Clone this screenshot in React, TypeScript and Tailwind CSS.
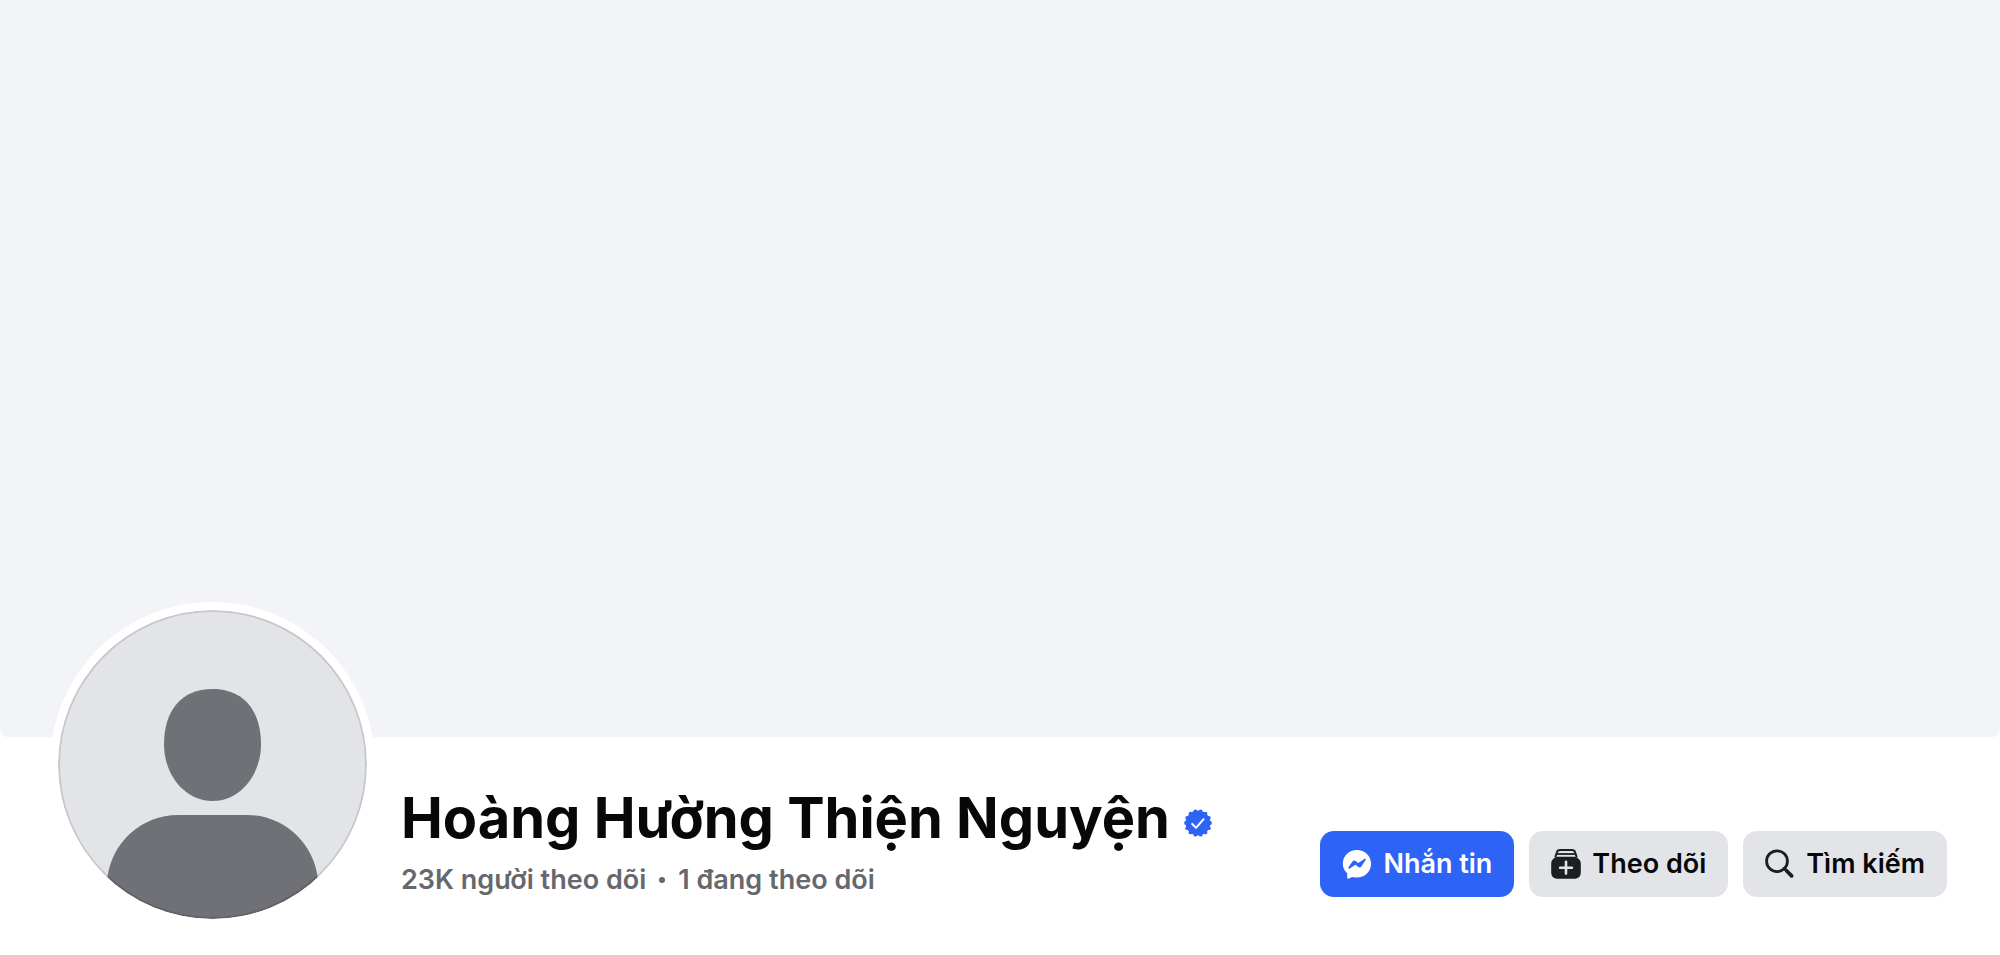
import type { ReactNode } from "react";

const PROFILE = {
  name: "Hoàng Hường Thiện Nguyện",
  followers: "23K người theo dõi",
  following: "1 đang theo dõi",
};

function AvatarPlaceholder() {
  return (
    <div className="shrink-0 size-[325px] -mt-[135px] rounded-full bg-white p-2">
      <svg viewBox="0 0 309 309" className="block size-full rounded-full" role="img" aria-label={PROFILE.name}>
        <defs>
          <clipPath id="avatar-clip">
            <circle cx="154.5" cy="154.5" r="154.5" />
          </clipPath>
        </defs>
        <g clipPath="url(#avatar-clip)">
          <rect width="309" height="309" fill="#e2e4e8" />
          <g fill="#707176">
            <path d="M154.500 79C186 79 203 101 203 134.500C203 165 182 191 154.500 191C127 191 106 165 106 134.500C106 101 123 79 154.500 79Z" />
            <path d="M120 205H189C225 205 256 232 260 270V309H49V270C53 232 84 205 120 205Z" />
          </g>
        </g>
        <circle cx="154.500" cy="154.500" r="153.500" fill="none" stroke="#000" strokeOpacity="0.12" strokeWidth="2" />
      </svg>
    </div>
  );
}

function VerifiedBadge() {
  // 14 bumps around a disc
  const bumps = Array.from({ length: 14 }, (_, i) => (i * 2 * Math.PI) / 14);

  return (
    <svg viewBox="0 0 28 28" className="mt-[10px] size-7 shrink-0" role="img" aria-label="Verified">
      <g fill="#2d64f6">
        <circle cx="14" cy="14" r="12.400" />
        {bumps.map((angle) => (
          <circle key={angle} cx={14 + 12 * Math.cos(angle)} cy={14 + 12 * Math.sin(angle)} r="1.900" />
        ))}
      </g>
      <path d="M8.200 15L12 18.800L19.600 10.200" fill="none" stroke="#fff" strokeWidth="2" strokeLinecap="round" strokeLinejoin="round" />
    </svg>
  );
}

function MessengerIcon() {
  return (
    <svg viewBox="0 0 30 30" className="size-[30px]" aria-hidden="true">
      <path d="M14.900 1C7 1 0.800 6.900 0.800 14.800C0.800 18.800 2.400 21.900 5.200 24.300V28.400C5.200 29.400 6 29.900 6.900 29.500L10.200 28C11.700 28.400 13.200 28.600 14.900 28.600C22.900 28.600 29.100 22.700 29.100 14.800C29.100 6.900 22.900 1 14.900 1Z" fill="#fff" />
      <path d="M6.500 18.200L10.600 12.300C11.300 11.300 12.500 11.100 13.500 11.900L16.300 14.100L22.300 9.900C23.300 9.300 24.200 10.200 23.600 11.100L19.300 17.400C18.600 18.500 17.300 18.700 16.300 17.900L13.400 15.700L7.700 19.500C6.800 20.100 5.900 19.100 6.500 18.200Z" fill="#2d64f6" />
    </svg>
  );
}

function FollowIcon() {
  return (
    <svg viewBox="0 0 30 30" className="size-[30px]" aria-hidden="true">
      <path d="M4.300 8.200L5.800 3.600C6.300 1.800 7.300 1 9 1H21C22.700 1 23.700 1.800 24.200 3.600L25.700 8.200" fill="none" stroke="#1c1e21" strokeWidth="2" />
      <path d="M5.400 5H24.600" stroke="#1c1e21" strokeWidth="1.800" />
      <path d="M3.600 8.800C4.600 7.900 5.900 7.700 7.500 7.700H22.500C24.100 7.700 25.400 7.900 26.400 8.800C28.500 10.200 29.800 12 29.800 14.500V23C29.800 27.500 27.500 29.800 23 29.800H7C2.500 29.800 0.200 27.500 0.200 23V14.500C0.200 12 1.500 10.200 3.600 8.800Z" fill="#1c1e21" />
      <path d="M15 12.800V24.600M9.100 18.700H20.900" stroke="#e2e4e8" strokeWidth="2.600" strokeLinecap="round" />
    </svg>
  );
}

function SearchIcon() {
  return (
    <svg viewBox="0 0 30 30" className="size-[30px]" aria-hidden="true" fill="none" stroke="#1c1e21" strokeLinecap="round">
      <circle cx="12" cy="12.200" r="10.400" strokeWidth="2.800" />
      <path d="M19.200 19.400L22 22.200" strokeWidth="3" />
      <path d="M21.800 22L26.600 26.800" strokeWidth="3.800" />
    </svg>
  );
}

type ActionButtonProps = {
  icon: ReactNode;
  label: string;
  primary?: boolean;
};

function ActionButton({ icon, label, primary }: ActionButtonProps) {
  return (
    <button
      type="button"
      className={`flex h-[66px] items-center gap-[11px] rounded-[14px] px-[22px] text-[27px] leading-9 font-semibold whitespace-nowrap ${
        primary ? "bg-[#2d64f6] text-white" : "bg-[#e2e4e8] text-[#080809]"
      }`}
    >
      {icon}
      {label}
    </button>
  );
}

export default function App() {
  return (
    <main className="w-full bg-white font-['Inter',sans-serif]">
      <div className="aspect-[2000/737] w-full rounded-b-lg bg-[#f2f4f7]" />

      <section className="flex items-start pr-[53px] pl-[50px]">
        <AvatarPlaceholder />

        <div className="mt-[49px] ml-[26px] min-w-0 grow">
          <h1 className="flex items-center gap-[14px] text-[56px] leading-16 font-bold text-[#080809]">
            {PROFILE.name}
            <VerifiedBadge />
          </h1>
          <p className="mt-3 flex items-center gap-[13px] text-[27px] leading-9 font-semibold text-[#65686c]">
            <span>{PROFILE.followers}</span>
            <span className="size-[6px] rounded-full bg-[#65686c]" />
            <span>{PROFILE.following}</span>
          </p>
        </div>

        <div className="mt-[94px] flex shrink-0 gap-[15px]">
          <ActionButton icon={<MessengerIcon />} label="Nhắn tin" primary />
          <ActionButton icon={<FollowIcon />} label="Theo dõi" />
          <ActionButton icon={<SearchIcon />} label="Tìm kiếm" />
        </div>
      </section>
    </main>
  );
}
